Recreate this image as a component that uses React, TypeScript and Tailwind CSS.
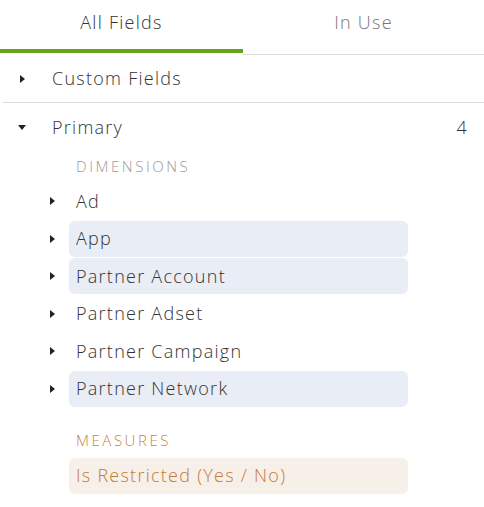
import { ReactNode } from 'react';

function CaretRight({ className = '' }: { className?: string }) {
  return (
    <svg width="5" height="8" viewBox="0 0 5 8" className={className}>
      <path d="M0 0 L5 4 L0 8 Z" fill="#222" />
    </svg>
  );
}

function CaretDown({ className = '' }: { className?: string }) {
  return (
    <svg width="8" height="5" viewBox="0 0 8 5" className={className}>
      <path d="M0 0 L8 0 L4 5 Z" fill="#222" />
    </svg>
  );
}

const dimensions = [
  { name: 'Ad', active: false },
  { name: 'App', active: true },
  { name: 'Partner Account', active: true },
  { name: 'Partner Adset', active: false },
  { name: 'Partner Campaign', active: false },
  { name: 'Partner Network', active: true },
];

function FieldRow({ children, active }: { children: ReactNode; active: boolean }) {
  return (
    <div className="flex h-9 items-center">
      <div className="flex w-[69px] justify-end pr-[14px]">
        <CaretRight />
      </div>
      <div
        className={
          'flex h-9 w-[339px] items-center rounded-md pl-[7px] ' +
          (active ? 'bg-[#e9edf5]' : '')
        }
      >
        {children}
      </div>
    </div>
  );
}

export default function App() {
  return (
    <div
      className="h-[507px] w-[484px] bg-white text-[18px] font-light tracking-[0.07em] text-[#333]"
      style={{ fontFamily: '"Open Sans", Arial, sans-serif' }}
    >
      {/* tabs */}
      <div className="flex h-[55px]">
        <div className="flex w-[243px] flex-col">
          <div className="flex h-[49px] items-center justify-center pb-[4px] text-[#333]">
            All Fields
          </div>
          <div className="h-[4px] bg-[#66a31c]" />
        </div>
        <div className="flex flex-1 flex-col border-b border-[#dedede]">
          <div className="flex h-[49px] items-center justify-center pb-[4px] text-[#777]">
            In Use
          </div>
        </div>
      </div>

      {/* custom fields */}
      <div className="ml-[3px] flex h-[48px] items-center border-b border-[#dedede]">
        <div className="flex w-[49px] justify-start pl-[17px]">
          <CaretRight />
        </div>
        <span>Custom Fields</span>
      </div>

      {/* primary */}
      <div className="flex h-[48px] items-center pr-[16px]">
        <div className="flex w-[52px] pl-[18px]">
          <CaretDown />
        </div>
        <span className="flex-1">Primary</span>
        <span>4</span>
      </div>

      <div className="flex h-[30px] items-center pl-[76px] text-[15px] uppercase tracking-[0.17em] text-[#9a9a9a]">
        Dimensions
      </div>
      <div className="mt-[2px] flex flex-col gap-[1.5px]">
        {dimensions.map((d) => (
          <FieldRow key={d.name} active={d.active}>
            {d.name}
          </FieldRow>
        ))}
      </div>

      <div className="mt-[19px] flex h-[30px] items-center pl-[76px] text-[15px] uppercase tracking-[0.17em] text-[#c97f3c]">
        Measures
      </div>
      <div className="mt-[2px] flex h-9 items-center">
        <div className="w-[69px]" />
        <div className="flex h-9 w-[339px] items-center rounded-md bg-[#f7f0e9] pl-[7px] text-[#c27b38]">
          Is Restricted (Yes / No)
        </div>
      </div>
    </div>
  );
}
